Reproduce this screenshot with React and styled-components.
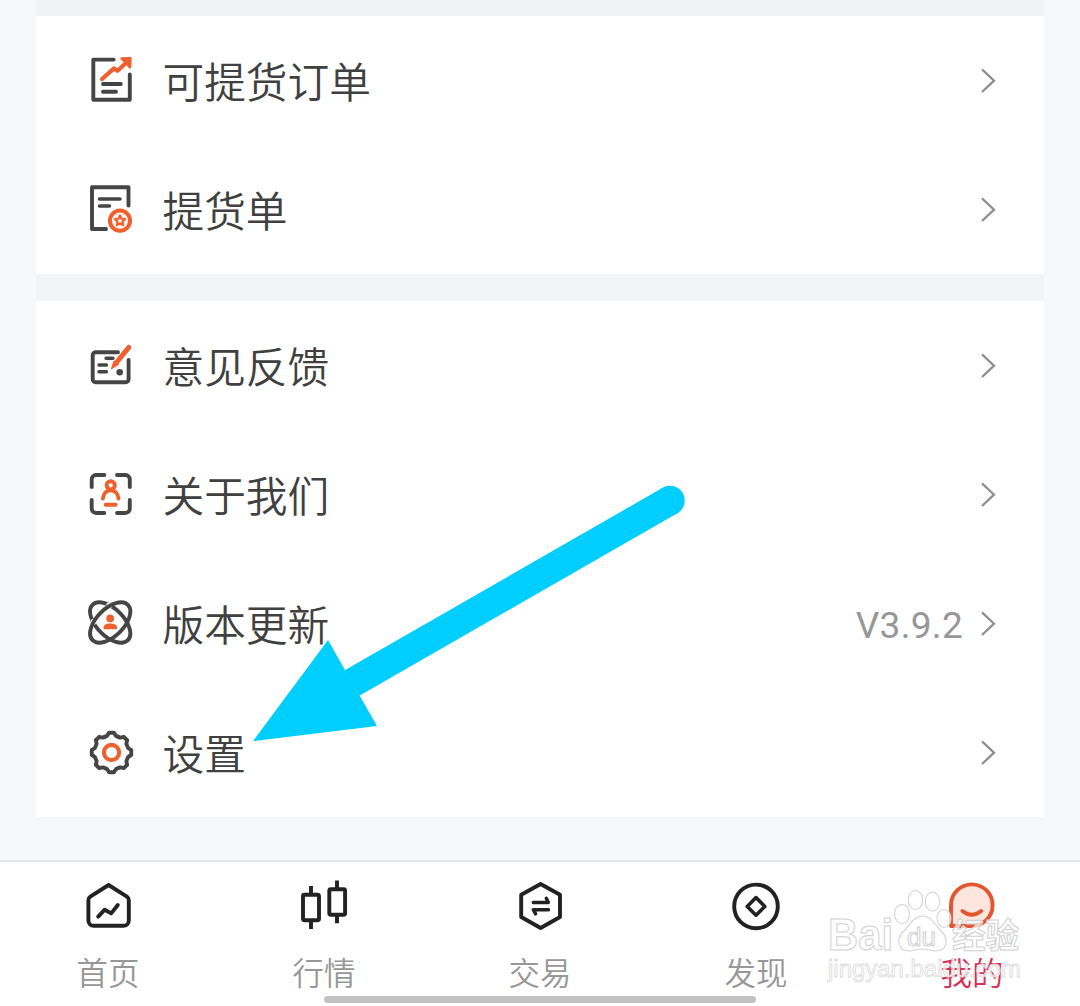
import React from 'react'
import styled, { createGlobalStyle } from "styled-components";

const GlobalStyle = createGlobalStyle`
  body {
    margin: 0;
    background: #f7f8fa;
    font-family: "Noto Sans CJK SC", "Noto Sans", sans-serif;
    overflow: hidden;
  }
`;

const Page = styled.div`
  position: relative;
  display: flex;
  flex-direction: column;
  width: 1080px;
  height: 1006px;
  overflow: hidden;
`;

const Content = styled.div`
  flex: 1;
  padding: 0 36px;
`;

const Strip = styled.div`
  height: ${(p) => p.$height}px;
  background: ${(p) => p.$color};
`;

const Card = styled.div`
  background: #fff;
`;

const StyledRow = styled.div`
  display: flex;
  align-items: center;
  height: 129px;
  padding: 0 48px 1px 50px;
  box-sizing: border-box;

  .icon {
    padding-top: 1px;
    display: flex;
  }

  .label {
    flex: 1;
    margin-left: 28.5px;
    font-size: 41.7px;
    font-weight: 350;
    line-height: 60px;
    color: #404040;
  }

  .value {
    margin-right: 17px;
    padding-top: 5px;
    font-family: Roboto, sans-serif;
    font-size: 37px;
    letter-spacing: 0.3px;
    color: #979797;
  }
`;

const TabBar = styled.div`
  height: 146px;
  box-sizing: border-box;
  border-top: 2px solid #e3e4e7;
  background: #fff;
`;

const Tabs = styled.div`
  display: flex;
  height: 134px;
`;

const StyledTab = styled.div`
  flex: 1;
  display: flex;
  flex-direction: column;
  align-items: center;
  padding-top: 18px;

  .label {
    margin-top: 16px;
    font-size: 31.5px;
    font-weight: 350;
    line-height: 46px;
    color: ${(p) => (p.$active ? '#d82f55' : '#979797')};
  }
`;

const HomeIndicator = styled.div`
  width: 432px;
  height: 7px;
  margin: 0 auto;
  border-radius: 4px;
  background: #c2c2c2;
`;

const Arrow = styled.svg`
  position: absolute;
  left: 240px;
  top: 470px;
`;

const Watermark = styled.svg`
  position: absolute;
  left: 820px;
  top: 880px;
`;

const dark = '#454545';
const orange = '#f0602f';

const RowIcon = ({ children }) => (
  <svg width="48" height="49" viewBox="0 0 48 49" fill="none" stroke={dark} strokeWidth="3.9" strokeLinecap="round" strokeLinejoin="round">
    {children}
  </svg>
);

const OrderIcon = () => (
  <RowIcon>
    <path d="M27.7 3.6H7.3V43.7H43.8V18.5" />
    <path d="M17 28H34.8M17 35.8H30" />
    <g stroke={orange}>
      <path d="M16 23L28 12.4L31.5 14.8L41 6" strokeWidth="4.2" />
      <path d="M35.5 2.4L44.5 2.2L44 11.5Z" fill={orange} strokeWidth="2.4" />
    </g>
  </RowIcon>
);

const DeliveryIcon = () => (
  <RowIcon>
    <path d="M20 44H6V2.3H42.5V20.5" />
    <path d="M13.5 14H34M13.5 21H23.5" strokeWidth="3.6" />
    <g stroke={orange}>
      <circle cx="34" cy="35.7" r="10.1" strokeWidth="4" fill="#fff1ea" />
      <path d="M34 30.4L35.5 33.7L39.2 34.1L36.5 36.6L37.2 40.2L34 38.4L30.8 40.2L31.5 36.6L28.8 34.1L32.5 33.7Z" strokeWidth="2.1" />
    </g>
  </RowIcon>
);

const FeedbackIcon = () => (
  <RowIcon>
    <path d="M32 11.3H9.7a3 3 0 0 0-3 3V38.3a3 3 0 0 0 3 3H39.6a3 3 0 0 0 3-3V19" />
    <path d="M20 17.3H27M13 24H20.5M13 30.7H20.5" strokeWidth="3.4" />
    <circle cx="33.7" cy="31.2" r="3.3" fill={dark} stroke="none" />
    <path d="M42.8 6.3L30 22" stroke={orange} strokeWidth="5" />
    <path d="M27.8 20.5L25.3 28L32.4 23.5Z" fill={orange} stroke={orange} strokeWidth="1" />
  </RowIcon>
);

const AboutIcon = () => (
  <RowIcon>
    <path d="M18.3 5H10a4.3 4.3 0 0 0-4.3 4.3V17M31 5H39.5a4.3 4.3 0 0 1 4.3 4.3V17M5.7 30V38.7A4.3 4.3 0 0 0 10 43H18.3M43.8 30V38.7A4.3 4.3 0 0 1 39.5 43H31" />
    <g stroke={orange}>
      <circle cx="24.7" cy="15.3" r="4.1" />
      <path d="M16.9 28.6C17.3 23.5 20.5 20.3 24.7 20.3S32.1 23.5 32.5 28.6" />
      <path d="M19.7 34.7H29.7" />
    </g>
  </RowIcon>
);

const VersionIcon = () => (
  <RowIcon>
    <ellipse cx="24.2" cy="23.5" rx="25" ry="13.6" transform="rotate(45 24.2 23.5)" />
    {/* the second orbit passes over the first one here */}
    <g fill="#fff" stroke="none">
      <circle cx="23.2" cy="6.6" r="3" />
      <circle cx="7.6" cy="22.8" r="3" />
    </g>
    <ellipse cx="24.2" cy="23.5" rx="25" ry="13.6" transform="rotate(-45 24.2 23.5)" />
    <circle cx="24.2" cy="19.3" r="3.9" fill={orange} stroke="none" />
    <path d="M17.6 30.3V28.5C17.6 25.5 20.5 24.4 24.2 24.4S31 25.5 31 28.5V30.3Z" fill={orange} stroke="none" />
  </RowIcon>
);

// outline of the cog, eight soft teeth
const gear = Array.from(Array(8), (_, i) => {
  const point = (r, deg) => {
    const a = ((i * 45 + deg) * Math.PI) / 180;
    return `${(25.5 + r * Math.cos(a)).toFixed(2)} ${(24.5 + r * Math.sin(a)).toFixed(2)}`;
  };
  return `${i ? 'L' : 'M'}${point(19.9, -7)}L${point(19.9, 7)}Q${point(18.2, 11)} ${point(17.2, 15)}Q${point(17, 22.5)} ${point(17.2, 30)}Q${point(18.2, 34)} ${point(19.9, 38)}`;
}).join('') + 'Z';

const SettingsIcon = () => (
  <RowIcon>
    <path d={gear} />
    <circle cx="25.5" cy="24.5" r="7.6" stroke={orange} strokeWidth="4.2" />
  </RowIcon>
);

const Chevron = () => (
  <svg width="16" height="28" viewBox="0 0 16 28" fill="none" stroke="#8f8f8f" strokeWidth="2.3">
    <path d="M2 3.4L14 14.7L2 26" />
  </svg>
);

const Row = ({ icon, label, value }) => {
  return (
    <StyledRow>
      <div className="icon">{icon}</div>
      <div className="label">{label}</div>
      {value ? <div className="value">{value}</div> : null}
      <Chevron />
    </StyledRow>
  );
};

const TabIcon = ({ children, color = '#222' }) => (
  <svg width="52" height="52" viewBox="0 0 52 52" fill="none" stroke={color} strokeWidth="3.9" strokeLinecap="round" strokeLinejoin="round">
    {children}
  </svg>
);

const HomeIcon = () => (
  <TabIcon>
    <path d="M26.6 5L8.3 16.6Q6.4 17.8 6.4 20V40.5a5.3 5.3 0 0 0 5.3 5.3H41.5a5.3 5.3 0 0 0 5.3-5.3V20Q46.8 17.8 44.9 16.6Z" />
    <path d="M16.2 36.6L22.7 29.7L29.2 33.4L35.8 25" />
  </TabIcon>
);

const MarketIcon = () => (
  <TabIcon>
    <rect x="5" y="14.7" width="16" height="25.6" rx="1.5" />
    <rect x="31.3" y="9.3" width="15.8" height="25.4" rx="1.5" />
    <path d="M13 6V14M13 41V49M39 0.5V9M39 35V43.3" strokeLinecap="butt" />
  </TabIcon>
);

const TradeIcon = () => (
  <TabIcon>
    <path d="M26.6 4L46 14.8V37L26.6 48L7.2 37V14.8Z" />
    <path d="M19.3 22.4H34.3L32.3 18.3M34.5 29.7H19.3L21.6 33.8" strokeWidth="3.5" />
  </TabIcon>
);

const DiscoverIcon = () => (
  <TabIcon>
    <circle cx="26" cy="26.4" r="21.8" />
    <path d="M26 17.6L34.8 26.4L26 35.2L17.2 26.4Z" strokeWidth="3.6" />
  </TabIcon>
);

const MineIcon = () => (
  <TabIcon color="#e4572e">
    <path d="M5 46V25.2A20.8 20.8 0 1 1 25.8 46Z" fill="#fee6df" />
    <path d="M16.4 31Q25.8 38.5 35.2 31" />
  </TabIcon>
);

const Tab = ({ icon, label, active }) => {
  return (
    <StyledTab $active={active}>
      {icon}
      <div className="label">{label}</div>
    </StyledTab>
  );
};

const BaiduMark = () => (
  <Watermark width="210" height="110" viewBox="0 0 210 110" fill="#fff" fillOpacity="0.7" stroke="#d3d3d3" strokeWidth="1.1">
    <ellipse cx="82" cy="34" rx="7.5" ry="9.5" />
    <ellipse cx="95.5" cy="20" rx="7.2" ry="9.5" />
    <ellipse cx="112.5" cy="21.5" rx="7.2" ry="9.5" />
    <ellipse cx="124" cy="38.5" rx="7" ry="9" />
    <path d="M103 36C111 36 115 45 122 52C129 59 127 71 116 71C111 71 108 69 102 69S94 71 89 71C78 71 76 59 83 52C90 45 94 36 103 36Z" />
    <g fontFamily="Liberation Sans, sans-serif" fontWeight="bold">
      <text x="8" y="70" fontSize="44" textLength="65" lengthAdjust="spacingAndGlyphs">Bai</text>
      <text x="87" y="66" fontSize="26" fontWeight="normal" textLength="29" lengthAdjust="spacingAndGlyphs">du</text>
      <text x="8" y="97" fontSize="23" fontWeight="normal" stroke="#dedede" strokeWidth="0.9" textLength="193" lengthAdjust="spacingAndGlyphs">jingyan.baidu.com</text>
    </g>
    <text x="132" y="67.5" fontSize="34" fontWeight="bold" fontFamily="Noto Sans CJK SC, sans-serif" textLength="67" lengthAdjust="spacingAndGlyphs">经验</text>
  </Watermark>
);

function App() {
  return (
    <>
      <GlobalStyle />
      <Page>
        <Content>
          <Strip $height={16} $color="#eff3f6" />
          <Card>
            <Row icon={<OrderIcon />} label="可提货订单" />
            <Row icon={<DeliveryIcon />} label="提货单" />
          </Card>
          <Strip $height={27} $color="#f3f4f6" />
          <Card>
            <Row icon={<FeedbackIcon />} label="意见反馈" />
            <Row icon={<AboutIcon />} label="关于我们" />
            <Row icon={<VersionIcon />} label="版本更新" value="V3.9.2" />
            <Row icon={<SettingsIcon />} label="设置" />
          </Card>
        </Content>

        <TabBar>
          <Tabs>
            <Tab icon={<HomeIcon />} label="首页" />
            <Tab icon={<MarketIcon />} label="行情" />
            <Tab icon={<TradeIcon />} label="交易" />
            <Tab icon={<DiscoverIcon />} label="发现" />
            <Tab icon={<MineIcon />} label="我的" active />
          </Tabs>
          <HomeIndicator />
        </TabBar>

        <Arrow width="460" height="290" viewBox="240 470 460 290" fill="#00ceff">
          <path d="M253 741L328 640L345 670L377 726Z" />
          <path d="M352 683L670 500.5" stroke="#00ceff" strokeWidth="29.4" />
          <circle cx="670" cy="500.5" r="14.7" />
        </Arrow>
        <BaiduMark />
      </Page>
    </>
  );
}

export default App;
